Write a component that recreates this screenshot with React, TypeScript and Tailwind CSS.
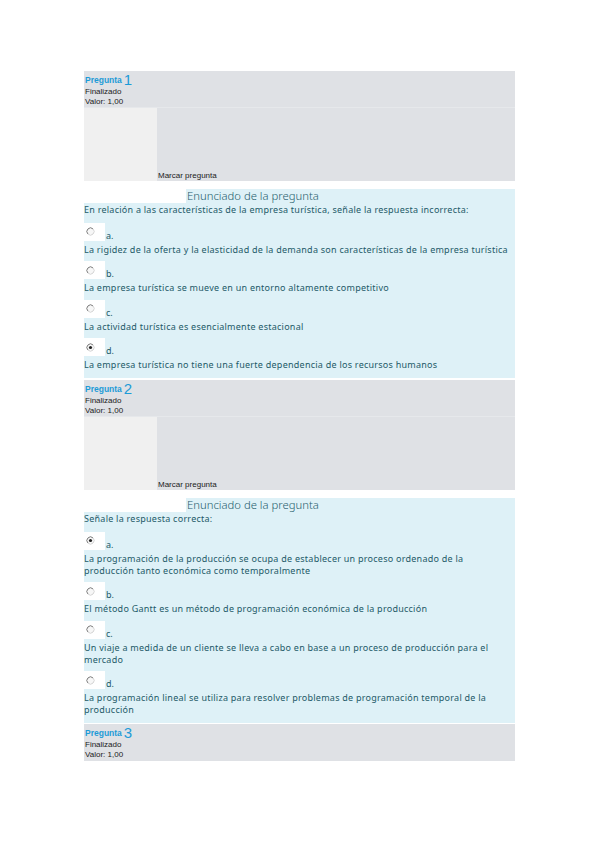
type Option = {
  letter: string
  lines: string[]
  checked: boolean
}

type Question = {
  number: number
  text: string
  options: Option[]
}

const questions: Question[] = [
  {
    number: 1,
    text: "En relación a las características de la empresa turística, señale la respuesta incorrecta:",
    options: [
      {
        letter: "a.",
        lines: ["La rigidez de la oferta y la elasticidad de la demanda son características de la empresa turística"],
        checked: false,
      },
      { letter: "b.", lines: ["La empresa turística se mueve en un entorno altamente competitivo"], checked: false },
      { letter: "c.", lines: ["La actividad turística es esencialmente estacional"], checked: false },
      {
        letter: "d.",
        lines: ["La empresa turística no tiene una fuerte dependencia de los recursos humanos"],
        checked: true,
      },
    ],
  },
  {
    number: 2,
    text: "Señale la respuesta correcta:",
    options: [
      {
        letter: "a.",
        lines: [
          "La programación de la producción se ocupa de establecer un proceso ordenado de la",
          "producción tanto económica como temporalmente",
        ],
        checked: true,
      },
      {
        letter: "b.",
        lines: ["El método Gantt es un método de programación económica de la producción"],
        checked: false,
      },
      {
        letter: "c.",
        lines: [
          "Un viaje a medida de un cliente se lleva a cabo en base a un proceso de producción para el",
          "mercado",
        ],
        checked: false,
      },
      {
        letter: "d.",
        lines: [
          "La programación lineal se utiliza para resolver problemas de programación temporal de la",
          "producción",
        ],
        checked: false,
      },
    ],
  },
]

const Radio = ({ checked }: { checked: boolean }) => (
  <svg width="9" height="9" viewBox="0 0 9 9">
    <circle cx="4.5" cy="4.5" r="3.6" fill="#f7f7f7" />
    <path d="M1.95 7.05 A3.6 3.6 0 0 1 7.05 1.95" fill="none" stroke="#7a7a7a" strokeWidth="1" />
    <path d="M7.05 1.95 A3.6 3.6 0 0 1 1.95 7.05" fill="none" stroke="#d4d4d4" strokeWidth="1" />
    {checked && <circle cx="4.5" cy="4.5" r="1.6" fill="#222" />}
  </svg>
)

const InfoBox = ({ number, withFlag }: { number: number; withFlag: boolean }) => (
  <div className="bg-[#dfe1e5] pl-[1px] pt-[2px] font-['Liberation_Sans',Arial,sans-serif] text-[8px] text-[#1a1a1a]">
    <div className="flex h-[14px] items-center">
      <span className="font-bold text-[8.5px] leading-[10px] text-[#1d9bd7]">Pregunta</span>
      <span className="ml-[2px] text-[15px] leading-[12px] text-[#1d9bd7]">{number}</span>
    </div>
    <div className="h-[10px] leading-[10px]">Finalizado</div>
    <div className="h-[10px] leading-[10px]">Valor: 1,00</div>
    {withFlag ? (
      <div className="flex items-end border-t border-[#e6e8eb] -ml-[1px]">
        <div className="w-[73px] h-[73px] bg-[#f0f0f0]" />
        <span className="ml-[1px] leading-[10px]">Marcar pregunta</span>
      </div>
    ) : (
      <div className="h-[1px]" />
    )}
  </div>
)

const QuestionBlock = ({ q }: { q: Question }) => (
  <div className="font-['Noto_Sans',sans-serif] text-[#1d5a68]">
    <div className="mt-[8px] ml-[102px] h-[14px] bg-[#def1f7] pl-[1px] text-[11.3px] font-light leading-[14px] text-[#1f5d6d]">
      Enunciado de la pregunta
    </div>
    <div className="bg-[#def1f7] pb-[7px]">
      <div className="h-[14px] text-[9px] leading-[14px] tracking-[0.25px] whitespace-nowrap">{q.text}</div>
      {q.options.map((o) => (
        <div key={o.letter} className="mt-[5.5px]">
          <div className="flex items-end h-[18px]">
            <div className="flex h-[18px] w-[21px] items-center bg-white pl-[2px]">
              <Radio checked={o.checked} />
            </div>
            <span className="ml-[1px] text-[9px] leading-[10px]">{o.letter}</span>
          </div>
          <div className="mt-[3px] text-[9px] leading-[12px] tracking-[0.25px] whitespace-nowrap">
            {o.lines.map((l) => (
              <div key={l}>{l}</div>
            ))}
          </div>
        </div>
      ))}
    </div>
  </div>
)

export default function App() {
  return (
    <div className="min-h-[848px] bg-white">
      <div className="ml-[84px] w-[431px] pt-[71px]">
        <InfoBox number={1} withFlag />
        <QuestionBlock q={questions[0]} />
        <div className="mt-[2px]">
          <InfoBox number={2} withFlag />
        </div>
        <QuestionBlock q={questions[1]} />
        <div className="mt-[1px]">
          <InfoBox number={3} withFlag={false} />
        </div>
      </div>
    </div>
  )
}
